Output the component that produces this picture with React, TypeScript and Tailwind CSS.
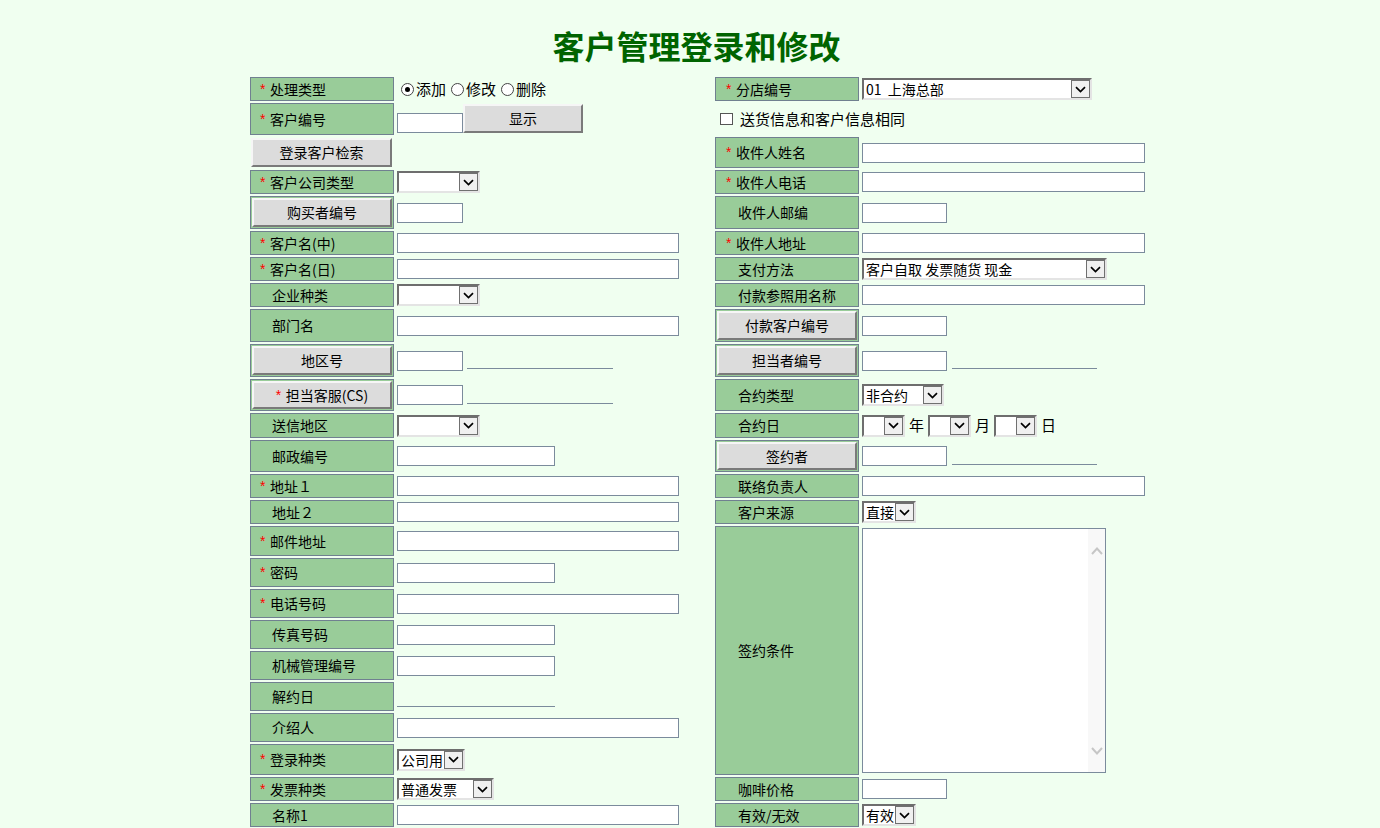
import React from "react";

const Star = () => (
  <span className="inline-block w-[10px] text-[#ff0000] font-['Liberation_Sans',sans-serif] text-[14px]">*</span>
);

const L = ({ star, right, children }: { star?: boolean; right?: boolean; children: React.ReactNode }) => (
  <div
    className={`flex items-center whitespace-nowrap bg-[#99cc99] border border-[#708090] text-[14px] text-black ${
      star ? (right ? "pl-[10px]" : "pl-[9px]") : right ? "pl-[22px]" : "pl-[21px]"
    }`}
  >
    {star && <Star />}
    {children}
  </div>
);

const Btn = ({ className, children }: { className?: string; children: React.ReactNode }) => (
  <div
    className={`flex items-center justify-center whitespace-nowrap bg-[#dcdcdc] border-2 border-t-[#f6f6f6] border-l-[#f6f6f6] border-r-[#7a7a7a] border-b-[#7a7a7a] text-[14px] text-black ${className ?? ""}`}
  >
    {children}
  </div>
);

const BL = ({ star, children }: { star?: boolean; children: React.ReactNode }) => (
  <div className="flex bg-[#99cc99] border border-[#708090] p-[1px]">
    <Btn className="w-full h-full">
      {star && <Star />}
      {children}
    </Btn>
  </div>
);

const Inp = ({ w }: { w: string }) => <div className={`h-[20px] bg-white border border-[#7b8b9c] ${w}`} />;

const Under = ({ w, ml }: { w: string; ml: string }) => (
  <div className={`h-[17px] border-b border-[#7b8b9c] ${w} ${ml}`} />
);

const Chevron = () => (
  <svg width="11" height="7" viewBox="0 0 11 7">
    <path d="M1 1.2l4.5 4.3 4.5-4.3" stroke="#000" strokeWidth="1.7" fill="none" />
  </svg>
);

const Sel = ({ w, text }: { w: string; text?: string }) => (
  <div
    className={`flex h-[22px] bg-white border-2 border-t-[#6e6e6e] border-l-[#6e6e6e] border-r-[#e4e4e4] border-b-[#e4e4e4] ${w}`}
  >
    <span className="flex-1 overflow-hidden whitespace-pre pl-[2px] text-[14px] leading-[18px] text-black">
      {text}
    </span>
    <span className="flex h-[18px] w-[19px] shrink-0 items-center justify-center border border-[#707070] bg-[#f0f0f0]">
      <Chevron />
    </span>
  </div>
);

const Radio = ({ checked }: { checked?: boolean }) => (
  <span className="flex h-[13px] w-[13px] items-center justify-center rounded-full border border-[#444] bg-white">
    {checked && <span className="h-[5px] w-[5px] rounded-full bg-black" />}
  </span>
);

const C = ({ children, className }: { children?: React.ReactNode; className?: string }) => (
  <div className={`flex items-center pl-[1px] ${className ?? ""}`}>{children}</div>
);

export default function App() {
  return (
    <div className="h-screen overflow-hidden bg-[#f0fff0] font-['Noto_Sans_CJK_SC',sans-serif] text-black">
      <div className="ml-[250px] w-[896px]">
        <div className="h-[77px] pt-[25px] pr-[3px] text-center text-[32px] font-bold leading-[40px] text-[#006400]">
          客户管理登录和修改
        </div>
        <div className="grid grid-cols-[144px_317px_144px_285px] grid-rows-[24px_32px_31px_24px_33px_24px_24px_24px_33px_33px_32px_25px_32px_24px_24px_30px_29px_29px_29px_29px_29px_29px_31px_24px_24px] gap-[2px]">
          {/* r1 */}
          <L star>处理类型</L>
          <C className="pl-[5px] text-[15px]">
            <Radio checked />
            <span className="ml-[2px]">添加</span>
            <span className="ml-[5px]">
              <Radio />
            </span>
            <span className="ml-[2px]">修改</span>
            <span className="ml-[5px]">
              <Radio />
            </span>
            <span className="ml-[2px]">删除</span>
          </C>
          <L star right>
            分店编号
          </L>
          <C>
            <Sel w="w-[230px]" text="01  上海总部" />
          </C>

          {/* r2 */}
          <L star>客户编号</L>
          <div className="flex items-end pb-[2px] pl-[1px]">
            <Inp w="w-[66px]" />
            <Btn className="w-[120px] h-[29px]">显示</Btn>
          </div>
          <div className="col-span-2 flex items-center pl-[5px] text-[15px]">
            <span className="h-[12px] w-[13px] border border-[#555] bg-white" />
            <span className="ml-[7px]">送货信息和客户信息相同</span>
          </div>

          {/* r3 */}
          <div className="flex items-start pl-[1px] pt-[1px]">
            <Btn className="w-[141px] h-[29px]">登录客户检索</Btn>
          </div>
          <div />
          <L star right>
            收件人姓名
          </L>
          <C>
            <Inp w="w-[283px]" />
          </C>

          {/* r4 */}
          <L star>客户公司类型</L>
          <C>
            <Sel w="w-[83px]" />
          </C>
          <L star right>
            收件人电话
          </L>
          <C>
            <Inp w="w-[283px]" />
          </C>

          {/* r5 */}
          <BL>购买者编号</BL>
          <C>
            <Inp w="w-[66px]" />
          </C>
          <L right>收件人邮编</L>
          <C>
            <Inp w="w-[85px]" />
          </C>

          {/* r6 */}
          <L star>客户名(中)</L>
          <C>
            <Inp w="w-[282px]" />
          </C>
          <L star right>
            收件人地址
          </L>
          <C>
            <Inp w="w-[283px]" />
          </C>

          {/* r7 */}
          <L star>客户名(日)</L>
          <C>
            <Inp w="w-[282px]" />
          </C>
          <L right>支付方法</L>
          <C>
            <Sel w="w-[245px]" text="客户自取 发票随货 现金" />
          </C>

          {/* r8 */}
          <L>企业种类</L>
          <C>
            <Sel w="w-[83px]" />
          </C>
          <L right>付款参照用名称</L>
          <C>
            <Inp w="w-[283px]" />
          </C>

          {/* r9 */}
          <L>部门名</L>
          <C>
            <Inp w="w-[282px]" />
          </C>
          <BL>付款客户编号</BL>
          <C>
            <Inp w="w-[85px]" />
          </C>

          {/* r10 */}
          <BL>地区号</BL>
          <C>
            <Inp w="w-[66px]" />
            <Under w="w-[146px]" ml="ml-[4px]" />
          </C>
          <BL>担当者编号</BL>
          <C>
            <Inp w="w-[85px]" />
            <Under w="w-[145px]" ml="ml-[5px]" />
          </C>

          {/* r11 */}
          <BL star>担当客服(CS)</BL>
          <C>
            <Inp w="w-[66px]" />
            <Under w="w-[146px]" ml="ml-[4px]" />
          </C>
          <L right>合约类型</L>
          <C>
            <Sel w="w-[82px]" text="非合约" />
          </C>

          {/* r12 */}
          <L>送信地区</L>
          <C>
            <Sel w="w-[83px]" />
          </C>
          <L right>合约日</L>
          <C className="text-[15px]">
            <Sel w="w-[43px]" />
            <span className="ml-[4px]">年</span>
            <span className="ml-[4px]">
              <Sel w="w-[43px]" />
            </span>
            <span className="ml-[4px]">月</span>
            <span className="ml-[4px]">
              <Sel w="w-[43px]" />
            </span>
            <span className="ml-[4px]">日</span>
          </C>

          {/* r13 */}
          <L>邮政编号</L>
          <C>
            <Inp w="w-[158px]" />
          </C>
          <BL>签约者</BL>
          <C>
            <Inp w="w-[85px]" />
            <Under w="w-[145px]" ml="ml-[5px]" />
          </C>

          {/* r14 */}
          <L star>地址１</L>
          <C>
            <Inp w="w-[282px]" />
          </C>
          <L right>联络负责人</L>
          <C>
            <Inp w="w-[283px]" />
          </C>

          {/* r15 */}
          <L>地址２</L>
          <C>
            <Inp w="w-[282px]" />
          </C>
          <L right>客户来源</L>
          <C>
            <Sel w="w-[54px]" text="直接" />
          </C>

          {/* r16 */}
          <L star>邮件地址</L>
          <C>
            <Inp w="w-[282px]" />
          </C>
          <div className="row-span-8 flex items-center whitespace-nowrap bg-[#99cc99] border border-[#708090] pl-[22px] text-[14px]">
            签约条件
          </div>
          <div className="row-span-8 flex items-center pl-[1px]">
            <div className="flex h-[245px] w-[244px] border border-[#7b8b9c] bg-white">
              <div className="flex-1" />
              <div className="flex w-[17px] flex-col items-center justify-between bg-[#f8f8f8] pb-[17px] pt-[18px]">
                <svg width="12" height="8" viewBox="0 0 12 8">
                  <path d="M1 7l5-5.5 5 5.5" stroke="#c6c6c6" strokeWidth="2" fill="none" />
                </svg>
                <svg width="12" height="8" viewBox="0 0 12 8">
                  <path d="M1 1l5 5.5 5-5.5" stroke="#c6c6c6" strokeWidth="2" fill="none" />
                </svg>
              </div>
            </div>
          </div>

          {/* r17 */}
          <L star>密码</L>
          <C>
            <Inp w="w-[158px]" />
          </C>

          {/* r18 */}
          <L star>电话号码</L>
          <C>
            <Inp w="w-[282px]" />
          </C>

          {/* r19 */}
          <L>传真号码</L>
          <C>
            <Inp w="w-[158px]" />
          </C>

          {/* r20 */}
          <L>机械管理编号</L>
          <C>
            <Inp w="w-[158px]" />
          </C>

          {/* r21 */}
          <L>解约日</L>
          <C>
            <div className="h-[20px] w-[158px] border-b border-[#7b8b9c]" />
          </C>

          {/* r22 */}
          <L>介绍人</L>
          <C>
            <Inp w="w-[282px]" />
          </C>

          {/* r23 */}
          <L star>登录种类</L>
          <C>
            <Sel w="w-[68px]" text="公司用" />
          </C>

          {/* r24 */}
          <L star>发票种类</L>
          <C>
            <Sel w="w-[97px]" text="普通发票" />
          </C>
          <L right>咖啡价格</L>
          <C>
            <Inp w="w-[85px]" />
          </C>

          {/* r25 */}
          <L>名称1</L>
          <C>
            <Inp w="w-[282px]" />
          </C>
          <L right>有效/无效</L>
          <C>
            <Sel w="w-[54px]" text="有效" />
          </C>
        </div>
      </div>
    </div>
  );
}
